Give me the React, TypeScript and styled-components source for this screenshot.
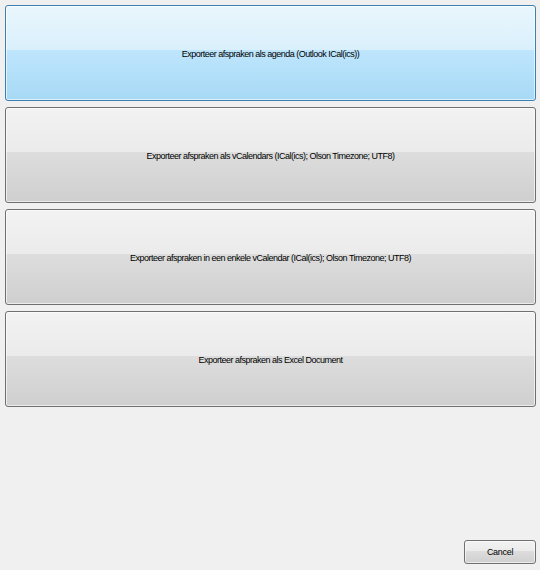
import React from 'react'
import styled, { createGlobalStyle } from 'styled-components'

const GlobalStyle = createGlobalStyle`
  html, body {
    margin: 0;
    padding: 0;
    background: #f0f0f0;
  }
  body {
    font-family: 'Liberation Sans', Arial, sans-serif;
  }
`

const Window = styled.div`
  width: 540px;
  height: 570px;
  box-sizing: border-box;
  padding: 5px 4px 6px 5px;
  display: flex;
  flex-direction: column;
  background: #f0f0f0;
`

const ButtonList = styled.div`
  display: flex;
  flex-direction: column;
  gap: 6px;
`

const ExportButton = styled.button<{ active?: boolean }>`
  height: 96px;
  width: 100%;
  box-sizing: border-box;
  border: 1px solid ${({ active }) => (active ? '#3c7fb1' : '#707070')};
  border-radius: 3px;
  box-shadow: inset 0 0 0 1px rgba(255, 255, 255, 0.6);
  background: ${({ active }) =>
    active
      ? 'linear-gradient(to bottom, #eaf6fd 0%, #d9f0fc 47%, #bee6fd 47%, #a7d9f5 100%)'
      : 'linear-gradient(to bottom, #f2f2f2 0%, #ebebeb 47%, #dddddd 47%, #cfcfcf 100%)'};
  font-family: 'Liberation Sans', Arial, sans-serif;
  font-size: 9px;
  letter-spacing: -0.5px;
  word-spacing: 0;
  color: #000;
  padding: 1px 0 0;
  cursor: default;
`

const Footer = styled.div`
  margin-top: auto;
  display: flex;
  justify-content: flex-end;
`

const CancelButton = styled.button`
  width: 72px;
  height: 24px;
  box-sizing: border-box;
  border: 1px solid #707070;
  border-radius: 3px;
  box-shadow: inset 0 0 0 1px rgba(255, 255, 255, 0.6);
  background: linear-gradient(to bottom, #f2f2f2 0%, #ebebeb 47%, #dddddd 47%, #cfcfcf 100%);
  font-family: 'Liberation Sans', Arial, sans-serif;
  font-size: 9px;
  letter-spacing: -0.3px;
  color: #000;
  padding: 0;
`

const options = [
  'Exporteer afspraken als agenda (Outlook ICal(ics))',
  'Exporteer afspraken als vCalendars (ICal(ics); Olson Timezone; UTF8)',
  'Exporteer afspraken in een enkele vCalendar (ICal(ics); Olson Timezone; UTF8)',
  'Exporteer afspraken als Excel Document',
]

const App: React.FC = () => {
  return (
    <Window>
      <GlobalStyle />
      <ButtonList>
        {options.map((label, i) => (
          <ExportButton key={label} active={i === 0}>
            {label}
          </ExportButton>
        ))}
      </ButtonList>
      <Footer>
        <CancelButton>Cancel</CancelButton>
      </Footer>
    </Window>
  )
}

export default App
